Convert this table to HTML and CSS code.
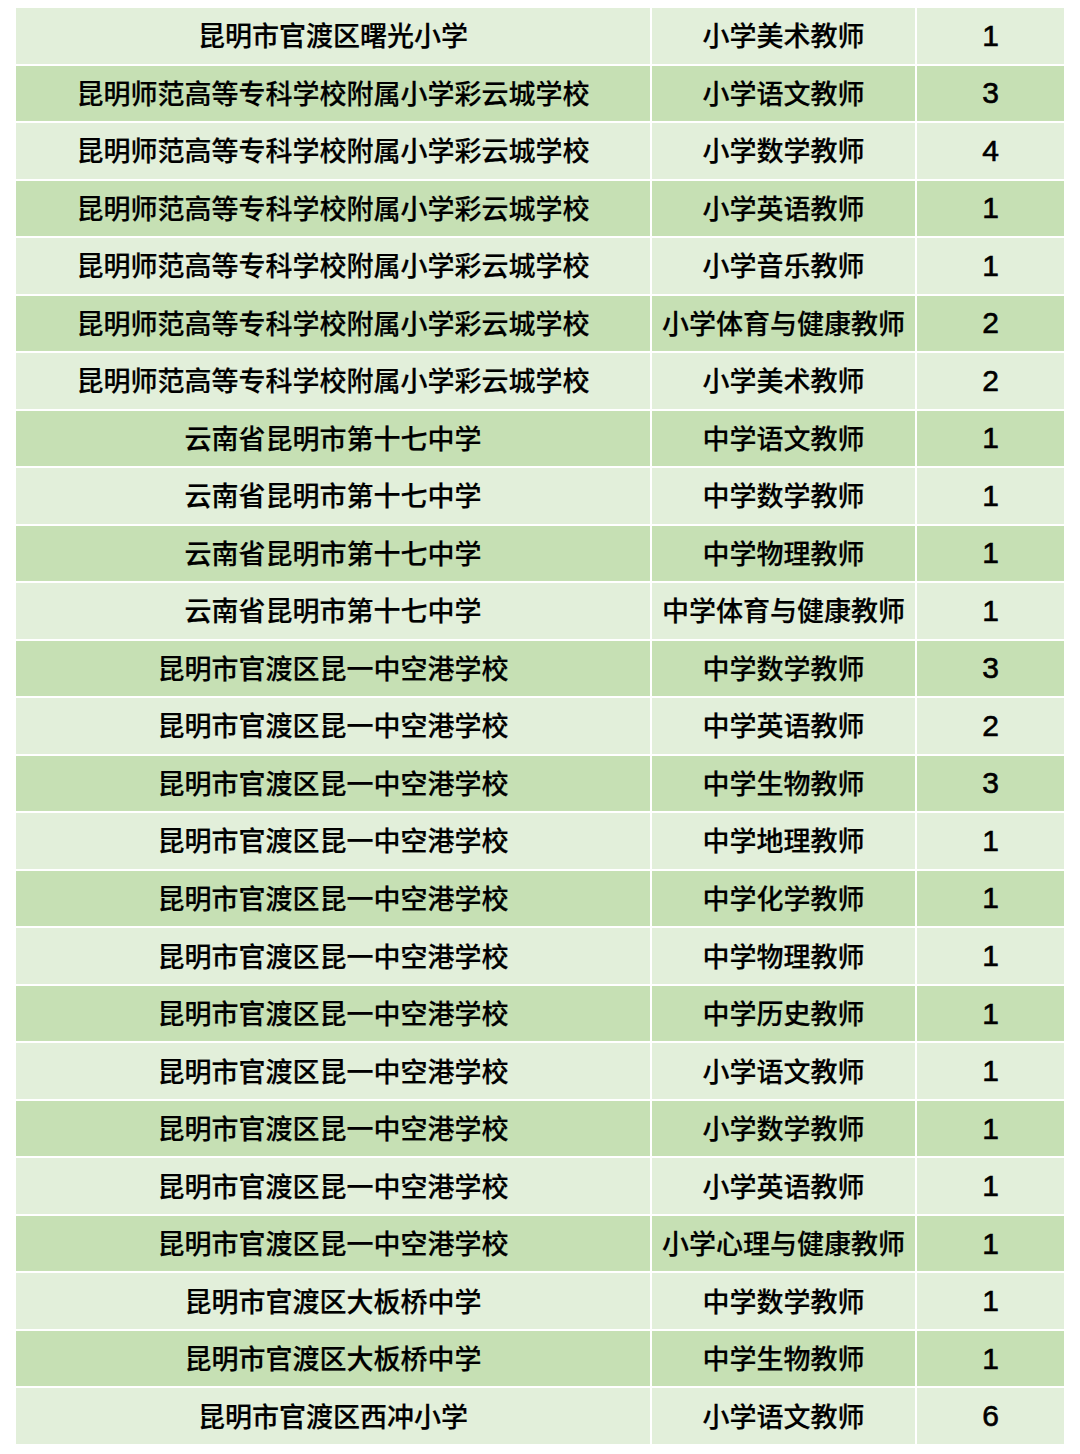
FILE: index.html
```html
<!DOCTYPE html>
<html lang="zh-CN">
<head>
<meta charset="utf-8">
<link rel="stylesheet" href="styles.css">
</head>
<body>
<div class="sheet">
<div class="c l">昆明市官渡区曙光小学</div><div class="c l">小学美术教师</div><div class="c l n">1</div>
<div class="c d">昆明师范高等专科学校附属小学彩云城学校</div><div class="c d">小学语文教师</div><div class="c d n">3</div>
<div class="c l">昆明师范高等专科学校附属小学彩云城学校</div><div class="c l">小学数学教师</div><div class="c l n">4</div>
<div class="c d">昆明师范高等专科学校附属小学彩云城学校</div><div class="c d">小学英语教师</div><div class="c d n">1</div>
<div class="c l">昆明师范高等专科学校附属小学彩云城学校</div><div class="c l">小学音乐教师</div><div class="c l n">1</div>
<div class="c d">昆明师范高等专科学校附属小学彩云城学校</div><div class="c d">小学体育与健康教师</div><div class="c d n">2</div>
<div class="c l">昆明师范高等专科学校附属小学彩云城学校</div><div class="c l">小学美术教师</div><div class="c l n">2</div>
<div class="c d">云南省昆明市第十七中学</div><div class="c d">中学语文教师</div><div class="c d n">1</div>
<div class="c l">云南省昆明市第十七中学</div><div class="c l">中学数学教师</div><div class="c l n">1</div>
<div class="c d">云南省昆明市第十七中学</div><div class="c d">中学物理教师</div><div class="c d n">1</div>
<div class="c l">云南省昆明市第十七中学</div><div class="c l">中学体育与健康教师</div><div class="c l n">1</div>
<div class="c d">昆明市官渡区昆一中空港学校</div><div class="c d">中学数学教师</div><div class="c d n">3</div>
<div class="c l">昆明市官渡区昆一中空港学校</div><div class="c l">中学英语教师</div><div class="c l n">2</div>
<div class="c d">昆明市官渡区昆一中空港学校</div><div class="c d">中学生物教师</div><div class="c d n">3</div>
<div class="c l">昆明市官渡区昆一中空港学校</div><div class="c l">中学地理教师</div><div class="c l n">1</div>
<div class="c d">昆明市官渡区昆一中空港学校</div><div class="c d">中学化学教师</div><div class="c d n">1</div>
<div class="c l">昆明市官渡区昆一中空港学校</div><div class="c l">中学物理教师</div><div class="c l n">1</div>
<div class="c d">昆明市官渡区昆一中空港学校</div><div class="c d">中学历史教师</div><div class="c d n">1</div>
<div class="c l">昆明市官渡区昆一中空港学校</div><div class="c l">小学语文教师</div><div class="c l n">1</div>
<div class="c d">昆明市官渡区昆一中空港学校</div><div class="c d">小学数学教师</div><div class="c d n">1</div>
<div class="c l">昆明市官渡区昆一中空港学校</div><div class="c l">小学英语教师</div><div class="c l n">1</div>
<div class="c d">昆明市官渡区昆一中空港学校</div><div class="c d">小学心理与健康教师</div><div class="c d n">1</div>
<div class="c l">昆明市官渡区大板桥中学</div><div class="c l">中学数学教师</div><div class="c l n">1</div>
<div class="c d">昆明市官渡区大板桥中学</div><div class="c d">中学生物教师</div><div class="c d n">1</div>
<div class="c l">昆明市官渡区西冲小学</div><div class="c l">小学语文教师</div><div class="c l n">6</div>
</div>
</body>
</html>
```
FILE: styles.css
```css
html, body {
  margin: 0;
  padding: 0;
  background: #ffffff;
}
body {
  padding: 8px 16px 0 16px;
}
.sheet {
  display: grid;
  grid-template-columns: 634px 263px 147px;
  grid-template-rows: repeat(25, 55.52px);
  column-gap: 2px;
  row-gap: 2px;
  width: 1048px;
  font-family: "Liberation Sans", "Noto Sans CJK SC", sans-serif;
  font-size: 27px;
  color: #000000;
}
.c {
  display: flex;
  align-items: center;
  justify-content: center;
  white-space: nowrap;
  font-weight: 500;
  padding-bottom: 2px;
  -webkit-text-stroke: 0.2px #000000;
}
.l {
  background: #e2efda;
}
.d {
  background: #c6e0b4;
}
.n {
  font-size: 30px;
  font-weight: 400;
  padding-bottom: 0;
  -webkit-text-stroke: 0.6px #000000;
}
```
